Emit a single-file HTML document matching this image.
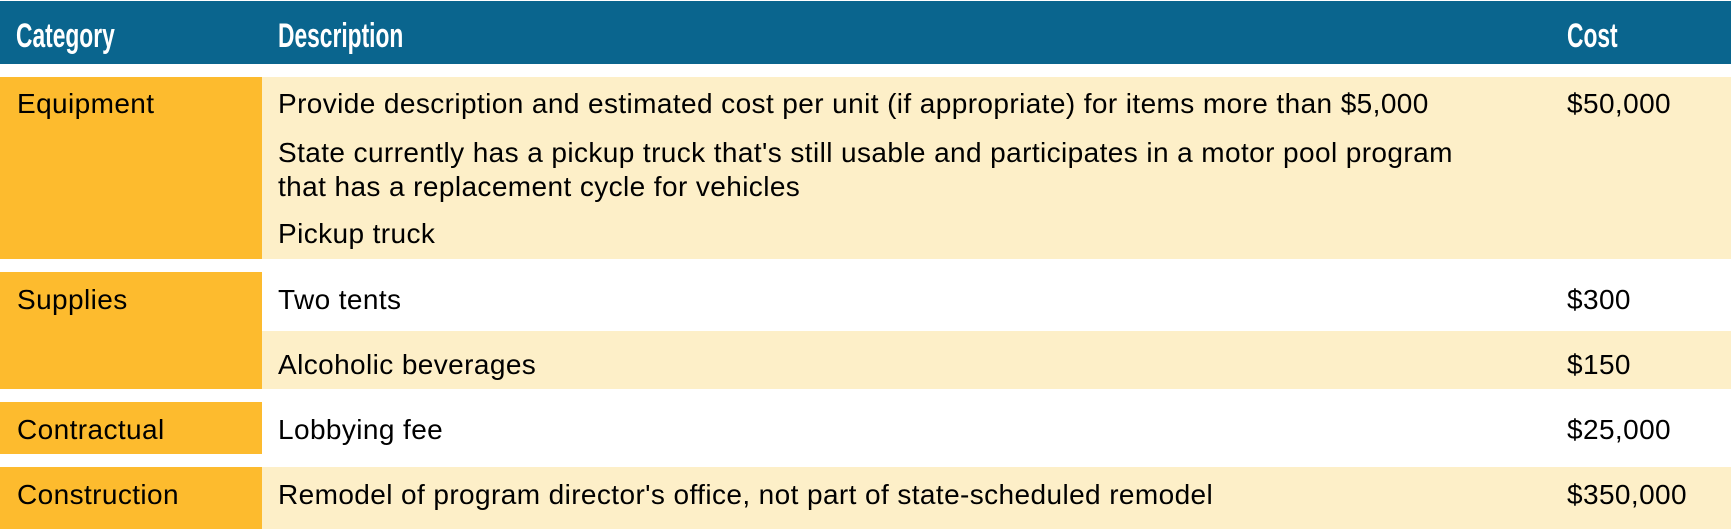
<!DOCTYPE html>
<html><head><meta charset="utf-8"><style>
html,body{margin:0;padding:0;background:#fff;width:1736px;height:529px;overflow:hidden;position:relative}
div{position:absolute}
.hd{left:0;top:1px;width:1731px;height:63px;background:#0a658e}
.h{font-family:"Liberation Sans",sans-serif;font-weight:bold;color:#fff;font-size:34px;line-height:40px;top:16px;transform:scaleX(0.67);transform-origin:left top;white-space:nowrap}
.o{background:#fdbb2e;left:0;width:262px}
.l{background:#fdefc8;left:262px;width:1469px}
.t{font-family:"Liberation Sans",Arial,sans-serif;font-size:28px;line-height:34px;color:#000;white-space:nowrap;letter-spacing:0.4px}
</style></head><body>
<div class="hd"></div>
<div class="h" style="left:16px">Category</div>
<div class="h" style="left:278px">Description</div>
<div class="h" style="left:1567px">Cost</div>

<div class="o" style="top:77px;height:182px"></div>
<div class="l" style="top:77px;height:182px"></div>
<div class="o" style="top:272px;height:117px"></div>
<div class="l" style="top:331px;height:58px"></div>
<div class="o" style="top:402px;height:52px"></div>
<div class="o" style="top:467px;height:62px"></div>
<div class="l" style="top:467px;height:62px"></div>

<div class="t" style="left:17px;top:87px">Equipment</div>
<div class="t" style="left:278px;top:87px">Provide description and estimated cost per unit (if appropriate) for items more than $5,000</div>
<div class="t" style="left:278px;top:136px">State currently has a pickup truck that's still usable and participates in a motor pool program<br>that has a replacement cycle for vehicles</div>
<div class="t" style="left:278px;top:217px">Pickup truck</div>
<div class="t" style="left:1567px;top:87px">$50,000</div>

<div class="t" style="left:17px;top:283px">Supplies</div>
<div class="t" style="left:278px;top:283px">Two tents</div>
<div class="t" style="left:1567px;top:283px">$300</div>
<div class="t" style="left:278px;top:348px">Alcoholic beverages</div>
<div class="t" style="left:1567px;top:348px">$150</div>

<div class="t" style="left:17px;top:413px">Contractual</div>
<div class="t" style="left:278px;top:413px">Lobbying fee</div>
<div class="t" style="left:1567px;top:413px">$25,000</div>

<div class="t" style="left:17px;top:478px">Construction</div>
<div class="t" style="left:278px;top:478px">Remodel of program director's office, not part of state-scheduled remodel</div>
<div class="t" style="left:1567px;top:478px">$350,000</div>
</body></html>
